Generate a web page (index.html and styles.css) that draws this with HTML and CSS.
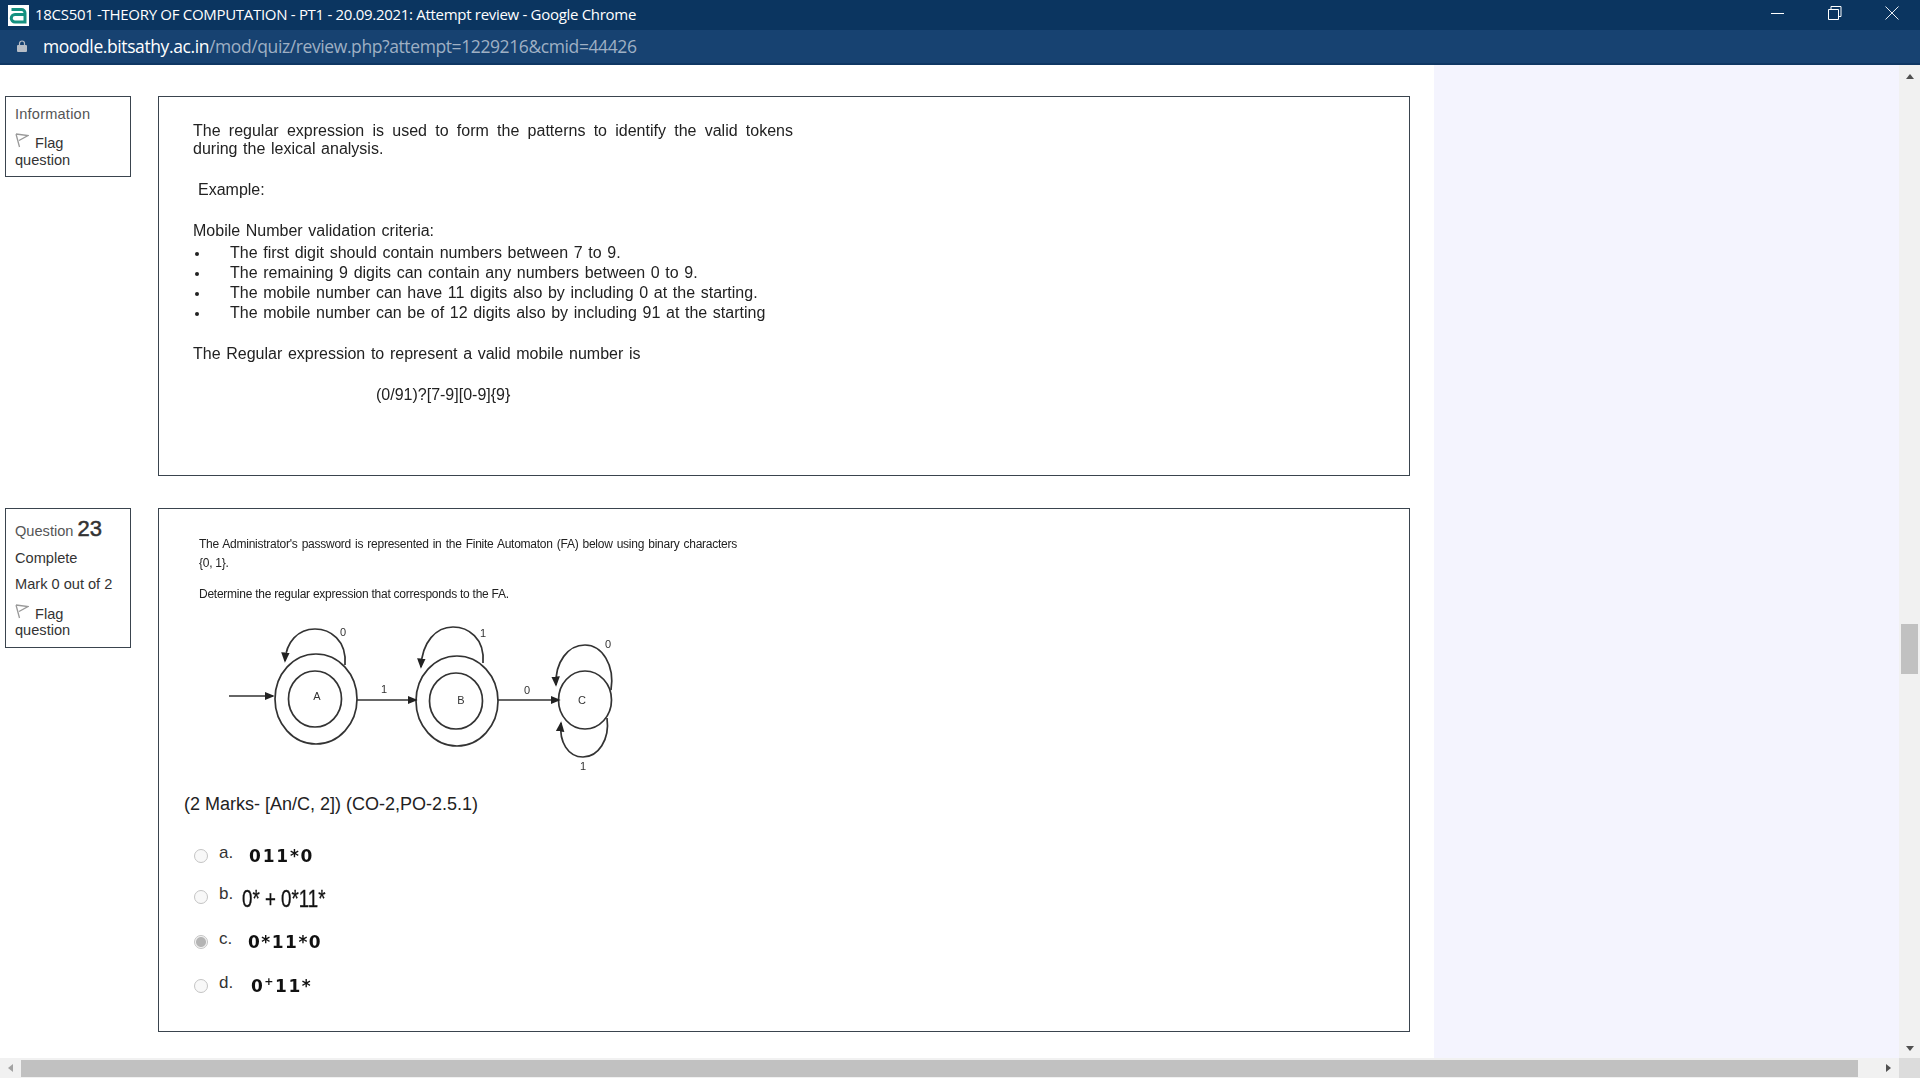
FILE: index.html
```html
<!DOCTYPE html>
<html lang="en">
<head>
  <meta charset="UTF-8" />
  <title>18CS501 -THEORY OF COMPUTATION - PT1 - 20.09.2021: Attempt review - Google Chrome</title>
  <link rel="stylesheet" href="styles.css">
</head>
<body>

<div class="titlebar">
  <svg class="app-icon" viewBox="0 0 21 21" width="21" height="21">
    <rect width="21" height="21" fill="#fff"/>
    <path d="M3.500 4.500h10a3.500 3.500 0 0 1 3.500 3.500v9H7a3.500 3.500 0 0 1 0-7.500h10" fill="none" stroke="#14907f" stroke-width="3"/>
  </svg>
  <span class="window-title">18CS501 -THEORY OF COMPUTATION - PT1 - 20.09.2021: Attempt review - Google Chrome</span>
  <div class="window-buttons">
    <svg viewBox="0 0 14 14" width="14" height="14"><path d="M0 7.500h13" stroke="#fff" fill="none"/></svg>
    <svg viewBox="0 0 14 14" width="14" height="14"><path d="M3 3V.5h10v10h-2.500M.5 3.500h10v10H.5z" stroke="#fff" fill="none"/></svg>
    <svg viewBox="0 0 14 14" width="14" height="14"><path d="M.5.500l13 13M13.500.500l-13 13" stroke="#e8edf3" fill="none"/></svg>
  </div>
</div>

<div class="addressbar">
  <svg class="lock" viewBox="0 0 10 12" width="10" height="12">
    <path d="M2.500 5V3.500a2.500 2.500 0 0 1 5 0V5" fill="none" stroke="#b6bdc6" stroke-width="1.200"/>
    <rect y="5" width="10" height="7" rx="1" fill="#b6bdc6"/>
  </svg>
  <span class="url"><span class="host">moodle.bitsathy.ac.in</span>/mod/quiz/review.php?attempt=1229216&amp;cmid=44426</span>
</div>

<div class="viewport">
  <div class="page">

    <div class="question">
      <div class="info">
        <div class="state-muted">Information</div>
        <div class="flag"><svg class="flag-icon" viewBox="0 0 14 15" width="14" height="15"><path d="M1 1l3.500 13M1 1l12 1.500-9 5" fill="none" stroke="#999" stroke-width="1.300"/></svg>Flag<br>question</div>
      </div>
      <div class="content info-content">
        <div class="scan">
          <p class="scan-intro">The regular expression is used to form the patterns to identify the valid tokens during the lexical analysis.</p>
          <p class="scan-example">Example:</p>
          <p class="scan-heading">Mobile Number validation criteria:</p>
          <ul class="scan-list">
            <li>The first digit should contain numbers between 7 to 9.</li>
            <li>The remaining 9 digits can contain any numbers between 0 to 9.</li>
            <li>The mobile number can have 11 digits also by including 0 at the starting.</li>
            <li>The mobile number can be of 12 digits also by including 91 at the starting</li>
          </ul>
          <p class="scan-closing">The Regular expression to represent a valid mobile number is</p>
          <p class="scan-regex">(0/91)?[7-9][0-9]{9}</p>
        </div>
      </div>
    </div>

    <div class="question">
      <div class="info q-info">
        <div class="state-muted">Question <span class="qno">23</span></div>
        <div class="state">Complete</div>
        <div class="state">Mark 0 out of 2</div>
        <div class="flag flag-q"><svg class="flag-icon" viewBox="0 0 14 15" width="14" height="15"><path d="M1 1l3.500 13M1 1l12 1.500-9 5" fill="none" stroke="#999" stroke-width="1.300"/></svg>Flag<br>question</div>
      </div>
      <div class="content q-content">
        <div class="scan scan-small">
          <p class="small-line">The Administrator's password is represented in the Finite Automaton (FA) below using binary characters</p>
          <p class="small-set">{0, 1}.</p>
          <p class="small-ask">Determine the regular expression that corresponds to the FA.</p>
        </div>

        <svg class="diagram" viewBox="220 610 410 175" width="410" height="175">
          <defs>
            <marker id="head" markerWidth="6" markerHeight="6" refX="5" refY="3" orient="auto">
              <path d="M0 .5L6 3 0 5.500z" fill="#222"/>
            </marker>
          </defs>
          <g fill="none" stroke="#333" stroke-width="1.700">
            <ellipse cx="316" cy="699" rx="41" ry="45"/>
            <ellipse cx="315" cy="699" rx="26.500" ry="28"/>
            <ellipse cx="457" cy="701" rx="41" ry="45"/>
            <ellipse cx="456" cy="701" rx="26.500" ry="28"/>
            <ellipse cx="585" cy="700" rx="26.500" ry="29"/>
            <path d="M229 696H273" marker-end="url(#head)"/>
            <path d="M357 700H416" marker-end="url(#head)"/>
            <path d="M498 700H559" marker-end="url(#head)"/>
            <path d="M345 665C347 640 330 629 315 629C298 629 286 642 285 661" marker-end="url(#head)"/>
            <path d="M483 663C485 638 468 627 453 627C436 627 422 642 421 667" marker-end="url(#head)"/>
            <path d="M611 690C615 665 602 645 585 645C568 645 555 662 556 685" marker-end="url(#head)"/>
            <path d="M607 718C610 740 598 757 583 757C568 757 559 742 561 723" marker-end="url(#head)"/>
          </g>
          <g class="diagram-text" text-anchor="middle">
            <text x="343" y="636">0</text>
            <text x="483" y="637">1</text>
            <text x="608" y="648">0</text>
            <text x="583" y="770">1</text>
            <text x="384" y="693">1</text>
            <text x="527" y="694">0</text>
            <text x="317" y="700">A</text>
            <text x="461" y="704">B</text>
            <text x="582" y="704">C</text>
          </g>
        </svg>

        <p class="marks">(2 Marks- [An/C, 2]) (CO-2,PO-2.5.1)</p>

        <div class="answers">
          <div class="answer"><span class="radio"></span><span class="letter">a.</span><span class="pick pick-a">011*0</span></div>
          <div class="answer answer-b"><span class="radio"></span><span class="letter">b.</span><span class="pick-b">0* + 0*11*</span></div>
          <div class="answer answer-c"><span class="radio radio-on"></span><span class="letter">c.</span><span class="pick pick-c">0*11*0</span></div>
          <div class="answer"><span class="radio"></span><span class="letter">d.</span><span class="pick pick-d">0<sup>+</sup>11*</span></div>
        </div>
      </div>
    </div>

  </div>
  <div class="side-panel"></div>
  <div class="vscroll">
    <span class="arrow arrow-up"></span>
    <span class="vthumb"></span>
    <span class="arrow arrow-down"></span>
  </div>
</div>

<div class="hscroll">
  <span class="arrow arrow-left"></span>
  <span class="hthumb"></span>
  <span class="arrow arrow-right"></span>
  <span class="corner"></span>
</div>

</body>
</html>
```

FILE: styles.css
```css
html, body {
  margin: 0;
  height: 100%;
  overflow: hidden;
}

body {
  display: flex;
  flex-direction: column;
  height: 1078px;
  background: #fff;
  font-family: "Liberation Sans", Arial, sans-serif;
  color: #333;
}

/* window chrome */
.titlebar {
  height: 30px;
  display: flex;
  align-items: center;
  padding-left: 8px;
  background: #0b3560;
  color: #fff;
  flex: none;
}

.app-icon {
  margin-top: 1px;
}

.window-title {
  margin-left: 6px;
  margin-top: -2px;
  font-family: "Open Sans", sans-serif;
  font-size: 15px;
  letter-spacing: -0.3px;
  white-space: nowrap;
}

.window-buttons {
  margin-left: auto;
  display: flex;
  gap: 43px;
  padding-right: 21px;
  margin-top: -4px;
}

.addressbar {
  height: 32px;
  display: flex;
  align-items: center;
  padding-left: 17px;
  padding-bottom: 1px;
  background: #174271;
  border-bottom: 2px solid #0f3763;
  flex: none;
}

.url {
  margin-left: 16px;
  font-family: "Open Sans", sans-serif;
  font-size: 17.500px;
  letter-spacing: -0.4px;
  color: #9fb0c4;
  white-space: nowrap;
}

.host {
  color: #fff;
}

/* page */
.viewport {
  flex: 1;
  display: flex;
  min-height: 0;
}

.page {
  width: 1434px;
  flex: none;
  padding: 31px 0 0 5px;
  box-sizing: border-box;
}

.side-panel {
  flex: 1;
  background: #f4f4fe;
}

.question {
  display: flex;
  align-items: flex-start;
  gap: 27px;
  margin-bottom: 32px;
}

.info {
  width: 126px;
  box-sizing: border-box;
  border: 1px solid #3a444e;
  padding: 9px 9px 7px;
  font-size: 14.600px;
  line-height: 17px;
  color: #333;
}

.q-info {
  padding-top: 12px;
  padding-bottom: 9px;
  line-height: 16px;
}

.state-muted {
  color: #555;
  height: 23px;
  letter-spacing: 0.2px;
}

.q-info .state-muted {
  height: 24px;
  letter-spacing: 0;
}

.state {
  height: 26px;
  line-height: 26px;
}

.qno {
  font-size: 22px;
  color: #333;
  -webkit-text-stroke: 0.5px #333;
}

.flag {
  margin-top: 4px;
}

.flag-q {
  margin-top: 7px;
}

.flag-icon {
  margin-right: 6px;
  vertical-align: 0;
}

.content {
  width: 1252px;
  box-sizing: border-box;
  border: 1px solid #3a444e;
}

.info-content {
  height: 380px;
}

.q-content {
  height: 524px;
}

/* text that is a picture in the original, so a little soft */
.scan {
  filter: blur(0.3px);
  color: #222;
}

.scan p {
  margin: 0;
}

.info-content .scan {
  width: 600px;
  padding: 24.500px 0 0 34px;
  font-size: 16px;
  word-spacing: 1.200px;
  line-height: 18px;
}

.scan-intro {
  text-align: justify;
}

.scan .scan-example {
  margin-top: 23px;
  padding-left: 5px;
}

.scan .scan-heading {
  margin-top: 23px;
}

.scan-list {
  list-style: none;
  margin: 3px 0 0;
  padding: 0 0 0 37px;
}

.scan-list li {
  height: 20.300px;
  line-height: 20.300px;
  position: relative;
}

.scan-list li::before {
  content: "";
  position: absolute;
  left: -35px;
  top: 9px;
  width: 4px;
  height: 4px;
  border-radius: 50%;
  background: #222;
}

.scan .scan-closing {
  margin-top: 21.500px;
}

.scan .scan-regex {
  margin: 23px 0 0 183px;
}

.scan-small {
  width: 538px;
  padding: 27px 0 0 40px;
  font-size: 12px;
  line-height: 16px;
  letter-spacing: -0.25px;
}

.small-line {
  text-align: justify;
  text-align-last: justify;
}

.scan .small-set {
  margin-top: 3px;
}

.scan .small-ask {
  margin-top: 15px;
}

.diagram {
  display: block;
  margin: 8px 0 0 61px;
  filter: blur(0.3px);
}

.diagram-text {
  font-size: 11px;
  fill: #333;
}

.marks {
  margin: 8px 0 0 25px;
  font-size: 18px;
  line-height: 22px;
  color: #222;
}

.answers {
  margin: 19px 0 0 35px;
  display: flex;
  flex-direction: column;
}

.answer {
  height: 44px;
  display: flex;
  align-items: center;
}

.answer-b {
  margin-top: -3px;
}

.answer-c {
  margin-top: 1px;
}

.radio {
  width: 14px;
  height: 14px;
  box-sizing: border-box;
  border: 1px solid #c4c4c4;
  border-radius: 50%;
  background: #f8f8f8;
  flex: none;
}

.radio-on {
  background: radial-gradient(circle, #b4b4b4 0 4.500px, #f4f4f4 5.500px);
}

.letter {
  margin-left: 11px;
  font-size: 17px;
  width: 21px;
  margin-top: -7px;
}

.pick {
  font-family: "DejaVu Sans", sans-serif;
  font-weight: 700;
  font-size: 17px;
  letter-spacing: 1.500px;
  color: #111;
  filter: blur(0.3px);
  white-space: nowrap;
}

.pick sup {
  font-size: 11px;
  line-height: 0;
}

.pick-a {
  margin-left: 9px;
  letter-spacing: 1.800px;
}

.pick-b {
  margin-left: 2px;
  margin-top: 4px;
  font-size: 24px;
  color: #111;
  white-space: nowrap;
  -webkit-text-stroke: 0.3px #111;
  filter: blur(0.3px);
  transform: scaleX(0.78);
  transform-origin: left center;
}

.pick-c {
  margin-left: 8px;
}

.pick-d {
  margin-left: 11px;
}

/* scrollbars */
.vscroll {
  width: 21px;
  flex: none;
  background: #f1f1f1;
  display: flex;
  flex-direction: column;
  align-items: center;
  padding: 9px 0 7px;
  box-sizing: border-box;
}

.vthumb {
  width: 17px;
  height: 50px;
  margin-top: 545px;
  background: #c1c1c1;
}

.arrow {
  width: 0;
  height: 0;
  flex: none;
}

.arrow-up {
  border: 4.500px solid transparent;
  border-top: 0;
  border-bottom: 5px solid #505050;
}

.arrow-down {
  margin-top: auto;
  border: 4.500px solid transparent;
  border-bottom: 0;
  border-top: 5px solid #505050;
}

.hscroll {
  height: 20px;
  flex: none;
  display: flex;
  align-items: center;
  background: #f1f1f1;
}

.arrow-left {
  margin-left: 8px;
  border: 4.500px solid transparent;
  border-left: 0;
  border-right: 5px solid #a3a3a3;
}

.hthumb {
  width: 1837px;
  height: 17px;
  margin-left: 8px;
  background: #c1c1c1;
}

.arrow-right {
  margin-left: 28px;
  border: 4.500px solid transparent;
  border-right: 0;
  border-left: 5px solid #505050;
}

.corner {
  margin-left: auto;
  width: 21px;
  height: 20px;
  background: #dcdcdc;
}
```
